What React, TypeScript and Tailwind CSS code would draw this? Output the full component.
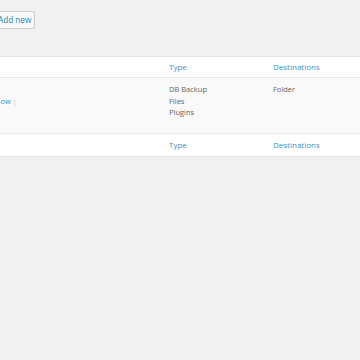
export default function App() {
  const font = { fontFamily: '"Open Sans", "Liberation Sans", sans-serif' };
  return (
    <div className="w-[360px] h-[360px] overflow-hidden bg-[#f1f1f1] flex flex-col" style={font}>
      <div className="flex pt-[11px] ml-[-6px]">
        <button className="h-[18px] px-[3px] border border-[#cccccc] bg-[#f7f7f7] rounded-[2px] text-[#2a86bf] text-[8.2px] leading-[16px]">
          Add new
        </button>
      </div>
      <div className="mt-[27px] ml-[-20px] w-[400px] bg-white border-y border-[#e3e3e3]">
        <div className="flex h-[21px] items-center border-b border-[#e6e6e6] text-[#3a92c6] text-[8px]">
          <div className="w-[189px]" />
          <div className="w-[104px]">Type</div>
          <div>Destinations</div>
        </div>
        <div className="flex h-[56px] bg-[#f9f9f9] border-b border-[#ececec] text-[7.5px] leading-[11.5px] text-[#666666] pt-[6px]">
          <div className="w-[189px] pt-[12px]">
            <span className="text-[#3a92c6]">Run now</span>
            <span className="text-[#cccccc] ml-[2px]">|</span>
          </div>
          <div className="w-[104px] flex flex-col">
            <span>DB Backup</span>
            <span>Files</span>
            <span>Plugins</span>
          </div>
          <div>Folder</div>
        </div>
        <div className="flex h-[22px] items-center text-[#3a92c6] text-[8px]">
          <div className="w-[189px]" />
          <div className="w-[104px]">Type</div>
          <div>Destinations</div>
        </div>
      </div>
    </div>
  );
}
